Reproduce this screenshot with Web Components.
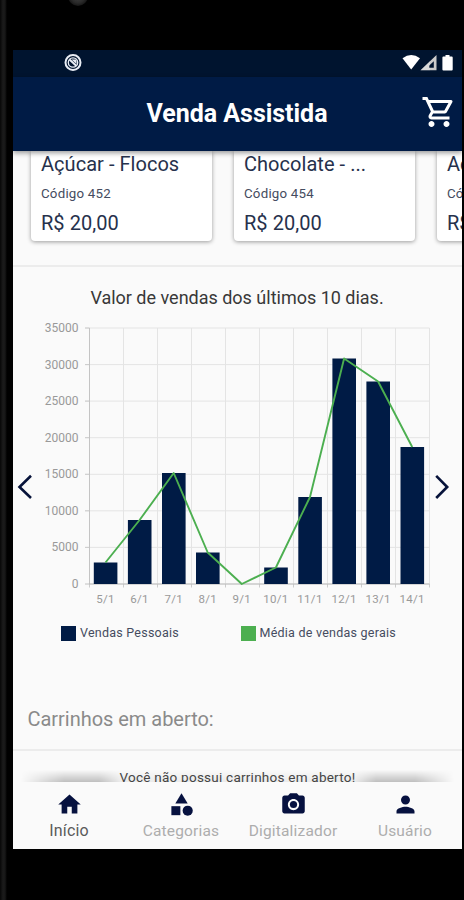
<!DOCTYPE html>
<html lang="pt-BR">
<head>
<meta charset="utf-8">
<title>Venda Assistida</title>
<style>
html,body{margin:0;height:100%;background:#000;overflow:hidden}
body{font-family:Roboto,"Liberation Sans",sans-serif;--navy:#001b45;--paper:#fafafa}
</style>
</head>
<body>
<phone-frame>
  <status-bar></status-bar>
  <app-bar>Venda Assistida</app-bar>
  <main-view>
    <card-row>
      <product-card code="Código 452" price="R$ 20,00">Açúcar - Flocos</product-card>
      <product-card code="Código 454" price="R$ 20,00">Chocolate - ...</product-card>
      <product-card code="Có" price="R$">Aç</product-card>
    </card-row>
    <sales-chart>Valor de vendas dos últimos 10 dias.</sales-chart>
    <open-carts heading="Carrinhos em aberto:">Você não possui carrinhos em aberto!</open-carts>
  </main-view>
  <bottom-nav>
    <nav-item icon="home" active>Início</nav-item>
    <nav-item icon="category">Categorias</nav-item>
    <nav-item icon="camera">Digitalizador</nav-item>
    <nav-item icon="person">Usuário</nav-item>
  </bottom-nav>
</phone-frame>
<script>
const define = (name, render) => customElements.define(name, class extends HTMLElement {
  connectedCallback() {
    if (!this.shadowRoot) this.attachShadow({ mode: 'open' }).innerHTML = render(this);
  }
});

define('phone-frame', () => `
<style>
:host{display:block;box-sizing:border-box;width:464px;height:900px;padding:50px 2px 51px 13px;position:relative;overflow:hidden;
background:linear-gradient(90deg,#070707 0,#1b1b1b 3px,#171717 5px,#000 7px,#000 100%)}
.lens{position:absolute;left:68px;top:-14px;width:20px;height:20px;border-radius:50%;background:radial-gradient(#444,#292929 50%,#1b1b1b 65%,#000)}
.screen{display:flex;flex-direction:column;height:799px;overflow:hidden;background:var(--paper)}
</style>
<div class="lens"></div><div class="screen"><slot></slot></div>`);

define('status-bar', () => `
<style>
:host{display:flex;flex:none;box-sizing:border-box;height:27px;background:#00142f;justify-content:space-between;padding:3px 8px 0 51px}
svg{display:block}
</style>
<svg width="18" height="18" viewBox="0 0 18 18" fill="none" stroke="#e8edf5"><circle cx="9" cy="9.500" r="7.500" stroke-width="2"/><circle cx="9" cy="9.500" r="4.700" stroke-width="1.300"/><path d="M5.500 6.500l7 6.500" stroke-width="2"/><path d="M7.500 6.500h5v4.500z" fill="#e8edf5" stroke="none"/></svg>
<svg width="52" height="20" viewBox="0 0 52 20" fill="#fff"><path d="M0.500 5.200Q9.200-1.300 18 5.200L9.200 16.600z"/><path fill="#ccc" fill-rule="evenodd" d="M18.500 17.200L34.500 2v15.200zM27 14.800h4.800V8.300L27 12.800z"/><path fill="#fff" d="M18.500 17.200L28 8v9.200z" opacity=".25"/><path d="M43.500 2h4v1.500h2.200q1 0 1 1v12q0 1-1 1h-8.300q-1 0-1-1v-12q0-1 1-1h2.100z"/></svg>`);

define('app-bar', () => `
<style>
:host{display:grid;grid-template-columns:1fr auto 1fr;align-items:center;flex:none;box-sizing:border-box;height:74px;padding:0 5px 0 0;background:var(--navy);color:#fff;position:relative;z-index:2;box-shadow:0 2px 5px rgba(0,0,0,.4)}
h1{grid-column:2;margin:0 0 0 4px;font-size:25px;font-weight:700;line-height:30px;letter-spacing:-.03px}
svg{justify-self:end;margin-top:-5px}
</style>
<h1><slot></slot></h1>
<svg width="36" height="36" viewBox="0 0 24 24" fill="#fff"><path d="M15.550 13c.75 0 1.410-.41 1.750-1.030l3.580-6.490A.996.996 0 0 0 20.010 4H5.210l-.94-2H1v2h2l3.600 7.590-1.350 2.440C4.520 15.370 5.480 17 7 17h12v-2H7l1.100-2h7.450zM6.160 6h12.150l-2.760 5H8.530L6.160 6zM7 18c-1.100 0-1.990.9-1.990 2S5.900 22 7 22s2-.9 2-2-.9-2-2-2zm10 0c-1.100 0-1.990.9-1.990 2s.89 2 1.990 2 2-.9 2-2-.9-2-2-2z"/></svg>`);

define('main-view', () => `
<style>:host{display:block;flex:1;min-height:0;overflow:hidden;background:var(--paper)}</style><slot></slot>`);

define('card-row', () => `
<style>:host{display:flex;gap:22px;box-sizing:border-box;height:116px;padding:0 0 0 18px;overflow:hidden;border-bottom:2px solid #ececec}</style><slot></slot>`);

define('product-card', e => `
<style>
:host{display:block;flex:none;box-sizing:border-box;width:181px;height:90px;padding:1px 10px 0;background:#fff;border-radius:0 0 4px 4px;box-shadow:0 1px 4px rgba(0,0,0,.38);color:#26314c}
div{white-space:nowrap}
.name{font-size:20px;line-height:25px;letter-spacing:.04px}
.code{font-size:13.300px;line-height:18px;margin-top:8px;letter-spacing:.22px;color:#454c60}
.price{font-size:20px;line-height:24px;margin-top:8px;letter-spacing:.05px}
</style>
<div class="name"><slot></slot></div><div class="code">${e.getAttribute('code')}</div><div class="price">${e.getAttribute('price')}</div>`);

define('sales-chart', () => {
  const days = ['5/1','6/1','7/1','8/1','9/1','10/1','11/1','12/1','13/1','14/1'];
  const tops = [235.5,193,146,225.5,257,240.5,170,31.5,54.5,120];
  const cx = i => 76.5 + i * 34.08 + 16;
  const f = n => n.toFixed(1);
  let grid = '', labels = '', bars = '';
  for (let i = 0; i <= 7; i++) {
    const y = 1 + i * 36.57;
    grid += `<path d="M72 ${f(y)}H416.500" stroke="#e4e4e4"/><path d="M72 ${f(y)}h4.500" stroke="#ccc"/>`;
    labels += `<text x="65.500" y="${f(y + 4)}" text-anchor="end">${35000 - i * 5000}</text>`;
  }
  for (let i = 0; i <= 10; i++) grid += `<path d="M${f(76.5 + i * 34)} 1v256" stroke="${i ? '#e4e4e4' : '#c4c4c4'}"/><path d="M${f(76.5 + i * 34)} 257v3.500" stroke="#ccc"/>`;
  grid += '<path d="M76 257H416.500" stroke="#bbb"/>';
  days.forEach((d, i) => {
    bars += `<rect x="${f(cx(i) - 11.7)}" y="${tops[i]}" width="23.600" height="${257 - tops[i]}"/>`;
    labels += `<text class="day" x="${f(cx(i))}" y="276" text-anchor="middle">${d}</text>`;
  });
  return `
<style>
:host{display:block;height:418px}
h2{margin:0;padding-top:18px;padding-right:1px;font-size:18px;line-height:26px;font-weight:400;text-align:center;color:#383838;letter-spacing:-.01px}
.plot{display:flex;position:relative;height:284px;margin-top:16px}
svg{display:block;overflow:visible}
text{font-size:12px;fill:#999}
.day{font-size:11.500px;letter-spacing:.3px}
.legend{display:flex;padding:13px 0 0 48px;font-size:12.500px;line-height:18px;color:#454c60}
.legend div{display:flex;align-items:center;gap:4px;width:179.500px;white-space:nowrap}
.legend i{width:15px;height:15px;flex:none}
</style>
<h2><slot></slot></h2>
<div class="plot"><svg width="449" height="284" viewBox="0 0 449 284">
<g fill="none">${grid}</g><g fill="#001b45">${bars}</g>
<polyline points="${days.map((d, i) => f(cx(i)) + ',' + tops[i]).join(' ')}" fill="none" stroke="#4caf50" stroke-width="1.900" stroke-linejoin="round"/>
${labels}
<path d="M18 148.800L6.500 160 18 171M423.200 148.800l11 11.200-11 11" fill="none" stroke="#07133a" stroke-width="2.600"/>
</svg></div>
<div class="legend"><div><i style="background:#001b45"></i><span style="letter-spacing:.24px">Vendas Pessoais</span></div><div><i style="background:#4caf50"></i><span style="letter-spacing:.24px">Média de vendas gerais</span></div></div>`;
});

define('open-carts', e => `
<style>
:host{display:block}
h3{margin:0;height:66px;box-sizing:border-box;padding:21px 14.500px 0;border-bottom:2px solid #ececec;font-size:20px;line-height:26px;font-weight:400;color:#8a8a8a;letter-spacing:-.03px}
p{margin:17px 0 0;font-size:13.500px;line-height:18px;text-align:center;color:#484848;letter-spacing:.24px}
</style>
<h3>${e.getAttribute('heading')}</h3><p><slot></slot></p>`);

define('bottom-nav', () => `
<style>
:host{display:grid;box-sizing:border-box;grid-template-columns:repeat(4,1fr);flex:none;height:67px;padding-right:1px;background:var(--paper);position:relative}
.shade{position:absolute;left:8px;right:8px;top:-12px;height:12px;background:linear-gradient(transparent,rgba(0,0,0,.24));-webkit-mask-image:linear-gradient(90deg,transparent,#000 10%,#000 18%,rgba(0,0,0,.25) 23%,rgba(0,0,0,.25) 77%,#000 82%,#000 91%,transparent)}
</style>
<div class="shade"></div><slot></slot>`);

const icons = {
  home: '<path d="M10 20v-6h4v6h5v-8h3L12 3 2 12h3v8z"/>',
  category: '<path d="M12 2l-5.500 9h11z"/><circle cx="17.500" cy="17.500" r="4.500"/><path d="M3 13.500h8v8H3z"/>',
  camera: '<circle cx="12" cy="12" r="3.200"/><path d="M9 2L7.170 4H4c-1.100 0-2 .9-2 2v12c0 1.100.9 2 2 2h16c1.100 0 2-.9 2-2V6c0-1.100-.9-2-2-2h-3.170L15 2H9zm3 15c-2.760 0-5-2.240-5-5s2.240-5 5-5 5 2.240 5 5-2.240 5-5 5z"/>',
  person: '<path d="M12 12c2.210 0 4-1.790 4-4s-1.790-4-4-4-4 1.790-4 4 1.790 4 4 4zm0 2c-2.670 0-8 1.340-8 4v2h16v-2c0-2.660-5.330-4-8-4z"/>'
};
define('nav-item', e => `
<style>
:host{display:flex;flex-direction:column;align-items:center;padding-top:9px;font-size:15.500px;line-height:20px;color:#adadad;letter-spacing:.18px}
:host([active]){color:#5a5a5a;font-size:16px}
svg{display:block;margin-bottom:3px}
</style>
<svg width="27" height="27" viewBox="0 0 24 24" fill="#06113f">${icons[e.getAttribute('icon')]}</svg><span><slot></slot></span>`);
</script>
</body>
</html>
